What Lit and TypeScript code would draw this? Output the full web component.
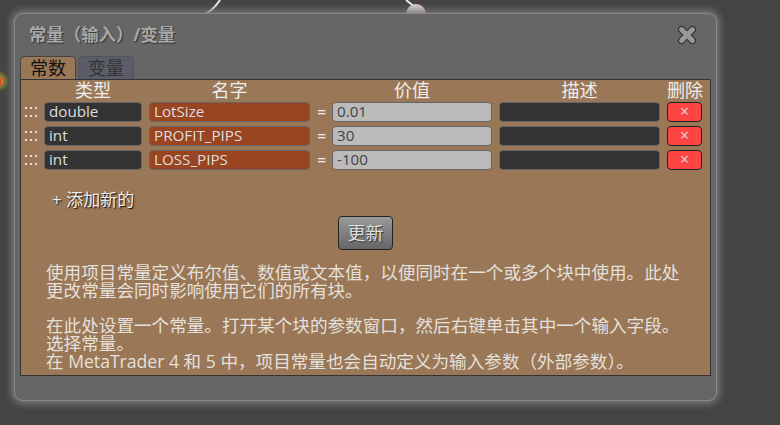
import { LitElement, html, css, svg } from "lit";
import { customElement } from "lit/decorators.js";

const rows = [
  { type: "double", name: "LotSize", value: "0.01" },
  { type: "int", name: "PROFIT_PIPS", value: "30" },
  { type: "int", name: "LOSS_PIPS", value: "-100" },
];

@customElement("app-root")
export class AppRoot extends LitElement {
  static styles = css`
    :host {
      display: block;
      position: relative;
      width: 780px;
      height: 425px;
      overflow: hidden;
      background: #444;
      font-family: "Open Sans", "Noto Sans CJK SC", sans-serif;
      color: #e6e6e6;
    }
    .canvas { position: absolute; inset: 0; }
    .dialog {
      position: absolute;
      left: 15px;
      top: 14px;
      width: 701px;
      height: 386px;
      box-sizing: border-box;
      border-radius: 8px;
      background: #666;
      box-shadow: 0 0 1px 1px #8a8a8a, 0 0 7px 4px #777;
      padding: 7px 5px 0 5px;
      display: flex;
      flex-direction: column;
    }
    .head { display: flex; justify-content: space-between; align-items: center; height: 27px; padding: 0 14px 0 9px; }
    .title { font-size: 17.4px; line-height: 27px; font-weight: 700; color: #a8a8a8; text-shadow: 1px 1px 1px #333; }
    .close { display: block; width: 20px; height: 20px; }
    .tabs { display: flex; gap: 2px; margin-top: 8px; height: 23px; }
    .tab {
      box-sizing: border-box;
      height: 23px;
      border: 1px solid #444;
      border-bottom: 0;
      border-radius: 5px 5px 0 0;
      font-size: 18px;
      line-height: 22px;
      text-align: center;
    }
    .tab.on { width: 56px; background: #9a7756; color: #111; }
    .tab.off { width: 56px; background: #5a5d68; color: #333; border-color: #555; }
    .panel {
      box-sizing: border-box;
      width: 691px;
      height: 297px;
      border: 1px solid #333;
      background: #9a7756;
      padding: 0 0 0 3px;
    }
    .grid {
      display: grid;
      grid-template-columns: 13px 98px 161px 8px 160px 161px 35px;
      column-gap: 7px;
      row-gap: 4px;
      align-items: center;
    }
    .th { font-size: 18px; line-height: 20px; height: 18px; text-align: center; color: #eee; white-space: nowrap; }
    .field {
      box-sizing: border-box;
      height: 20px;
      border: 1px solid #666;
      border-radius: 4px;
      font-size: 15.2px;
      line-height: 17px;
      padding: 0 0 0 4px;
      white-space: nowrap;
    }
    .dark { background: #333; color: #ddd; }
    .rust { background: #9a4422; color: #ddd; }
    .light { background: #bbb; color: #444; }
    .eq { font-size: 16px; text-align: center; line-height: 20px; color: #eee; }
    .grip { display: block; width: 13px; height: 10px; justify-self: start; }
    .del {
      box-sizing: border-box;
      height: 20px;
      border: 1px solid #222;
      border-radius: 4px;
      background: #f44;
      color: #ddd;
      font-size: 16px;
      line-height: 17px;
      text-align: center;
    }
    .add {
      margin: 20px 0 0 28px;
      font-size: 17px;
      line-height: 20px;
      color: #eee;
      text-shadow: 1px 1px 1px #111;
    }
    .btn-row { display: flex; justify-content: center; margin-top: 6px; padding-right: 3px; }
    .btn {
      box-sizing: border-box;
      width: 55px;
      height: 34px;
      border: 1px solid #222;
      border-radius: 4px;
      background: linear-gradient(#9a9a9a, #666);
      color: #ddd;
      font-size: 18px;
      line-height: 32px;
      text-align: center;
      text-shadow: 1px 1px 1px #333;
    }
    .help {
      margin: 14px 0 0 22px;
      width: 640px;
      font-size: 17.6px;
      line-height: 17.8px;
      color: #e4e0dc;
    }
    .help p { margin: 0; }
    .help .gap { margin-bottom: 17.8px; }
  `;

  private grip() {
    return html`<svg class="grip" viewBox="0 0 13 10">
      ${[1, 6, 11].map((x) => [0, 8].map((y) => svg`<rect x=${x} y=${y} width="2" height="2" fill="#e4e0dc"></rect>`))}
    </svg>`;
  }

  render() {
    return html`
      <svg class="canvas" viewBox="0 0 780 425">
        <defs>
          <radialGradient id="glow">
            <stop offset="0.3" stop-color="#c8b020" stop-opacity="0.8"></stop>
            <stop offset="1" stop-color="#c8b020" stop-opacity="0"></stop>
          </radialGradient>
        </defs>
        <circle cx="-2" cy="81" r="11" fill="url(#glow)"></circle>
        <rect x="-2" y="78" width="3" height="7" fill="#e33"></rect>
        <path d="M204 14 Q212 12 220 0" fill="none" stroke="#eee" stroke-width="2"></path>
        <path d="M406 0 L416 8" fill="none" stroke="#eee" stroke-width="2"></path>
        <circle cx="416" cy="14" r="10" fill="#dcc8dc"></circle>
      </svg>
      <div class="dialog">
        <div class="head">
          <span class="title">常量（输入）/变量</span>
          <svg class="close" viewBox="0 0 22 22">
            <path d="M5 5 L17 17 M17 5 L5 17" stroke="#333" stroke-width="8" stroke-linecap="round"></path>
            <path d="M5 5 L17 17 M17 5 L5 17" stroke="#999" stroke-width="5.5" stroke-linecap="round"></path>
          </svg>
        </div>
        <div class="tabs">
          <div class="tab on">常数</div>
          <div class="tab off">变量</div>
        </div>
        <div class="panel">
          <div class="grid">
            <div></div>
            <div class="th">类型</div>
            <div class="th">名字</div>
            <div></div>
            <div class="th">价值</div>
            <div class="th">描述</div>
            <div class="th">删除</div>
            ${rows.map(
              (r) => html`
                ${this.grip()}
                <div class="field dark">${r.type}</div>
                <div class="field rust">${r.name}</div>
                <div class="eq">=</div>
                <div class="field light">${r.value}</div>
                <div class="field dark"></div>
                <div class="del">×</div>
              `
            )}
          </div>
          <div class="add">+ 添加新的</div>
          <div class="btn-row"><div class="btn">更新</div></div>
          <div class="help">
            <p class="gap">使用项目常量定义布尔值、数值或文本值，以便同时在一个或多个块中使用。此处更改常量会同时影响使用它们的所有块。</p>
            <p>在此处设置一个常量。打开某个块的参数窗口，然后右键单击其中一个输入字段。选择常量。</p>
            <p>在 MetaTrader 4 和 5 中，项目常量也会自动定义为输入参数（外部参数）。</p>
          </div>
        </div>
      </div>
    `;
  }
}
